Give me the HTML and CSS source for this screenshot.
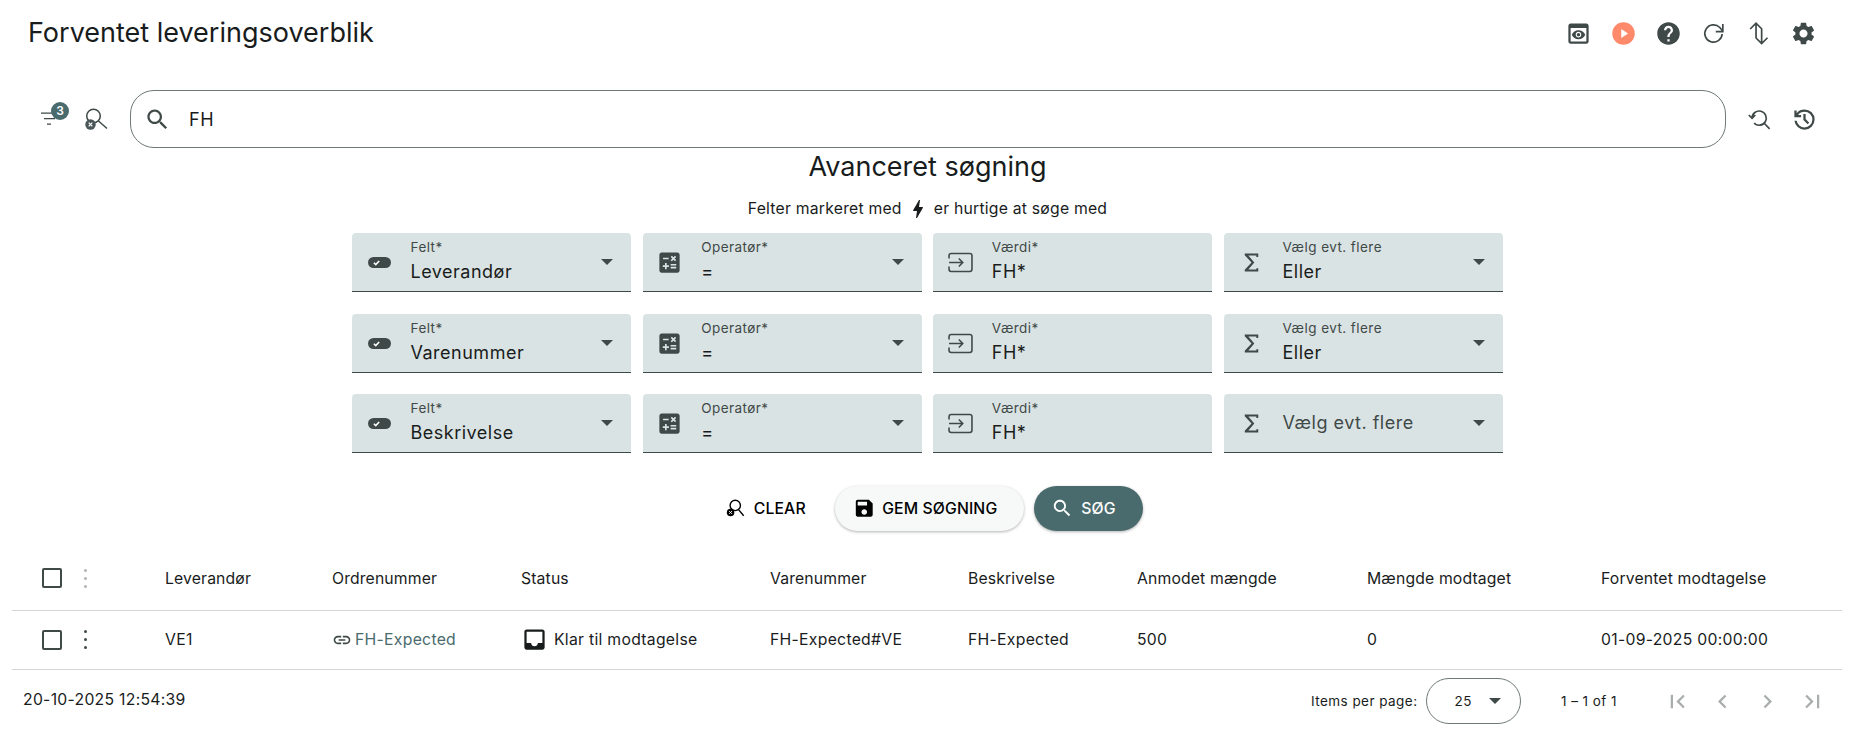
FILE: index.html
```html
<!DOCTYPE html>
<html lang="da">
<head>
<meta charset="utf-8">
<title>Forventet leveringsoverblik</title>
<link rel="stylesheet" href="styles.css">
</head>
<body>
<svg class="sprite" width="0" height="0">
  <defs>
    <symbol id="i-search" viewBox="0 0 24 24"><path d="M15.5 14h-.79l-.28-.27C15.41 12.59 16 11.11 16 9.5 16 5.91 13.09 3 9.5 3S3 5.91 3 9.5 5.91 16 9.5 16c1.61 0 3.09-.59 4.23-1.57l.27.28v.79l5 4.99L20.49 19l-4.99-5zm-6 0C7.01 14 5 11.99 5 9.5S7.01 5 9.5 5 14 7.01 14 9.5 11.99 14 9.5 14z"/></symbol>
    <symbol id="i-toggle" viewBox="0 0 24 24"><rect x="1.800" y="7.100" width="20.400" height="9.800" rx="4.900"/><path d="M7 12.200l1.700 1.700 3-3.200" fill="none" stroke="#fff" stroke-width="1.400"/></symbol>
    <symbol id="i-calc" viewBox="0 0 24 24"><path d="M19 3H5c-1.100 0-2 .9-2 2v14c0 1.100.9 2 2 2h14c1.100 0 2-.9 2-2V5c0-1.100-.9-2-2-2zm-5.970 4.060L14.090 6l1.410 1.410L16.910 6l1.060 1.060-1.410 1.410 1.410 1.410-1.060 1.060-1.410-1.400-1.410 1.410-1.060-1.060 1.410-1.410-1.410-1.420zm-6.780.66h5v1.500h-5v-1.500zM11.500 16h-2v2H8v-2H6v-1.500h2v-2h1.500v2h2V16zm6.500 1.250h-5v-1.500h5v1.500zm0-2.500h-5v-1.500h5v1.500z"/></symbol>
    <symbol id="i-input" viewBox="0 0 24 24"><path d="M1.800 8.500V6c0-1.100.9-2 2-2h16.400c1.100 0 2 .9 2 2v12c0 1.100-.9 2-2 2H3.800c-1.100 0-2-.9-2-2v-2.500M1.800 12H14M10.500 8.500l3.500 3.500-3.500 3.500" fill="none" stroke="#3f4948" stroke-width="1.400"/></symbol>
    <symbol id="i-sigma" viewBox="0 0 24 24"><path d="M6 4h12v3h-1.700V5.800H9.200l5.300 6.200-5.300 6.200h7.100V17H18v3H6v-1.600L12 12 6 5.600z"/></symbol>
  </defs>
</svg>

<header class="topbar">
  <h1 class="title">Forventet leveringsoverblik</h1>
  <div class="top-icons">
    <svg class="ico" viewBox="0 0 24 24"><path d="M19 3H5c-1.110 0-2 .9-2 2v14c0 1.100.89 2 2 2h14c1.100 0 2-.9 2-2V5c0-1.100-.89-2-2-2zm0 16H5V7h14v12zm-5.500-6c0 .83-.67 1.500-1.500 1.500s-1.500-.67-1.500-1.500.67-1.500 1.500-1.500 1.500.67 1.500 1.500zM12 9c-2.730 0-5.060 1.660-6 4 .94 2.340 3.270 4 6 4s5.060-1.660 6-4c-.94-2.340-3.270-4-6-4zm0 6.500c-1.380 0-2.500-1.120-2.500-2.500s1.120-2.500 2.500-2.500 2.500 1.120 2.500 2.500-1.120 2.500-2.500 2.500z"/></svg>
    <svg class="ico" viewBox="0 0 24 24"><circle cx="12" cy="12" r="10" fill="#ff8a6b"/><path d="M10 8v8l6-4z" fill="#fff"/></svg>
    <svg class="ico" viewBox="0 0 24 24"><path d="M12 2C6.480 2 2 6.480 2 12s4.480 10 10 10 10-4.480 10-10S17.520 2 12 2zm1 17h-2v-2h2v2zm2.070-7.750l-.9.92C13.450 12.900 13 13.500 13 15h-2v-.5c0-1.100.45-2.100 1.170-2.830l1.240-1.260c.37-.36.59-.86.59-1.410 0-1.100-.9-2-2-2s-2 .9-2 2H8c0-2.210 1.790-4 4-4s4 1.790 4 4c0 .88-.36 1.680-.93 2.250z"/></svg>
    <svg class="ico" viewBox="0 0 24 24"><path class="line" d="M19.700 12.500A7.700 7.700 0 1 1 17.600 6.700L20 9.500M20.300 3.600v6.800H14"/></svg>
    <svg class="ico" viewBox="0 0 24 24"><path class="line" d="M9.800 16V2.800M4.600 8l5.200-5.200L15 8M14.800 7.500V21M9.600 15.800l5.200 5.200 5.200-5.200"/></svg>
    <svg class="ico" viewBox="0 0 24 24"><path d="M19.140 12.940c.04-.3.06-.61.06-.94 0-.32-.02-.64-.07-.94l2.030-1.580c.18-.14.23-.41.12-.61l-1.920-3.320c-.12-.22-.37-.29-.59-.22l-2.390.96c-.5-.38-1.030-.7-1.620-.94l-.36-2.540c-.04-.24-.24-.41-.48-.41h-3.840c-.24 0-.43.17-.47.41l-.36 2.540c-.59.24-1.130.57-1.620.94l-2.390-.96c-.22-.08-.47 0-.59.22L2.740 8.870c-.12.21-.08.47.12.61l2.030 1.580c-.05.3-.09.63-.09.94s.02.64.07.94l-2.030 1.580c-.18.14-.23.41-.12.61l1.920 3.320c.12.22.37.29.59.22l2.390-.96c.5.38 1.030.7 1.620.94l.36 2.540c.05.24.24.41.48.41h3.840c.24 0 .44-.17.47-.41l.36-2.540c.59-.24 1.130-.56 1.620-.94l2.390.96c.22.08.47 0 .59-.22l1.920-3.320c.12-.22.07-.47-.12-.61l-2.010-1.580zM12 15.600c-1.980 0-3.600-1.620-3.600-3.600s1.620-3.600 3.600-3.600 3.600 1.620 3.600 3.600-1.620 3.600-3.600 3.600z"/></svg>
  </div>
</header>

<section class="searchbar">
  <div class="filter-btn">
    <svg class="ico-filter" viewBox="0 0 16 16"><path d="M0 .6h15v1.200H0zM3 6h11v1.200H3zM6 11.500h4v1.200H6z"/></svg>
    <span class="badge">3</span>
  </div>
  <svg class="ico-clear" viewBox="0 0 24 24">
    <circle cx="9.500" cy="9" r="6.800" class="line"/><path d="M14.500 14l8.500 7.500" class="line"/>
    <circle cx="6.500" cy="17.500" r="5.200" fill="#4a5658"/><path d="M4.700 15.700l3.600 3.600M8.300 15.700l-3.600 3.600" stroke="#fff" stroke-width="1.200"/>
  </svg>
  <div class="searchbox">
    <svg class="ico-search" viewBox="0 0 24 24"><use href="#i-search"/></svg>
    <span class="query">FH</span>
  </div>
  <div class="search-actions">
    <svg class="ico" viewBox="0 0 24 24"><path class="line" d="M5.400 10.800A6.300 6.300 0 1 1 7.200 15.200M16.200 15.300L21 20.300M2.500 8l2.900 3 2.900-3"/></svg>
    <svg class="ico" viewBox="0 0 24 24"><path d="M12 21q-3.450 0-6.012-2.288T3.050 13H5.100q.35 2.600 2.313 4.300T12 19q2.925 0 4.963-2.037T19 12q0-2.925-2.037-4.963T12 5q-1.725 0-3.225.8T6.250 8H9v2H3V4h2v2.350q1.275-1.600 3.113-2.475T12 3q3.750 0 6.375 2.625T21 12q0 3.750-2.625 6.375T12 21Zm2.800-4.800L11 12.400V7h2v4.600l3.200 3.200-1.400 1.400Z"/></svg>
  </div>
</section>

<section class="advanced">
  <h2 class="adv-title">Avanceret søgning</h2>
  <p class="adv-hint">Felter markeret med
    <svg class="ico-bolt" viewBox="0 0 24 24"><path d="M11 21h-1l1-7H7.500c-.58 0-.57-.32-.38-.66.19-.34.05-.08.07-.12C8.480 10.940 10.420 7.540 13 3h1l-1 7h3.500c.49 0 .56.33.47.51l-.07.15C12.960 17.550 11 21 11 21z"/></svg>
    er hurtige at søge med</p>

  <div class="rows">
    <div class="row-fields">
      <div class="field"><svg class="f-ico" viewBox="0 0 24 24"><use href="#i-toggle"/></svg><div class="f-text"><span class="f-label">Felt*</span><span class="f-value">Leverandør</span></div><span class="caret"></span></div>
      <div class="field"><svg class="f-ico" viewBox="0 0 24 24"><use href="#i-calc"/></svg><div class="f-text"><span class="f-label">Operatør*</span><span class="f-value">=</span></div><span class="caret"></span></div>
      <div class="field"><svg class="f-ico" viewBox="0 0 24 24"><use href="#i-input"/></svg><div class="f-text"><span class="f-label">Værdi*</span><span class="f-value">FH*</span></div></div>
      <div class="field"><svg class="f-ico" viewBox="0 0 24 24"><use href="#i-sigma"/></svg><div class="f-text"><span class="f-label">Vælg evt. flere</span><span class="f-value">Eller</span></div><span class="caret"></span></div>
    </div>
    <div class="row-fields">
      <div class="field"><svg class="f-ico" viewBox="0 0 24 24"><use href="#i-toggle"/></svg><div class="f-text"><span class="f-label">Felt*</span><span class="f-value">Varenummer</span></div><span class="caret"></span></div>
      <div class="field"><svg class="f-ico" viewBox="0 0 24 24"><use href="#i-calc"/></svg><div class="f-text"><span class="f-label">Operatør*</span><span class="f-value">=</span></div><span class="caret"></span></div>
      <div class="field"><svg class="f-ico" viewBox="0 0 24 24"><use href="#i-input"/></svg><div class="f-text"><span class="f-label">Værdi*</span><span class="f-value">FH*</span></div></div>
      <div class="field"><svg class="f-ico" viewBox="0 0 24 24"><use href="#i-sigma"/></svg><div class="f-text"><span class="f-label">Vælg evt. flere</span><span class="f-value">Eller</span></div><span class="caret"></span></div>
    </div>
    <div class="row-fields">
      <div class="field"><svg class="f-ico" viewBox="0 0 24 24"><use href="#i-toggle"/></svg><div class="f-text"><span class="f-label">Felt*</span><span class="f-value">Beskrivelse</span></div><span class="caret"></span></div>
      <div class="field"><svg class="f-ico" viewBox="0 0 24 24"><use href="#i-calc"/></svg><div class="f-text"><span class="f-label">Operatør*</span><span class="f-value">=</span></div><span class="caret"></span></div>
      <div class="field"><svg class="f-ico" viewBox="0 0 24 24"><use href="#i-input"/></svg><div class="f-text"><span class="f-label">Værdi*</span><span class="f-value">FH*</span></div></div>
      <div class="field"><svg class="f-ico" viewBox="0 0 24 24"><use href="#i-sigma"/></svg><div class="f-text f-empty"><span class="f-placeholder">Vælg evt. flere</span></div><span class="caret"></span></div>
    </div>
  </div>

  <div class="buttons">
    <button class="btn btn-text">
      <svg class="b-ico" viewBox="0 0 24 24"><circle cx="12" cy="9" r="5.500" fill="none" stroke="#000" stroke-width="1.500"/><path d="M15.500 13.500l5.500 6.500" stroke="#000" stroke-width="1.500"/><circle cx="7" cy="16.500" r="4" fill="#000"/><path d="M5.500 15l3 3M8.500 15l-3 3" stroke="#fff" stroke-width="1"/></svg>
      CLEAR</button>
    <button class="btn btn-light">
      <svg class="b-ico" viewBox="0 0 24 24"><path d="M17 3H5c-1.110 0-2 .9-2 2v14c0 1.100.89 2 2 2h14c1.100 0 2-.9 2-2V7l-4-4zm-5 16c-1.660 0-3-1.340-3-3s1.340-3 3-3 3 1.340 3 3-1.340 3-3 3zm3-10H5V5h10v4z"/></svg>
      GEM SØGNING</button>
    <button class="btn btn-primary">
      <svg class="b-ico b-ico-white" viewBox="0 0 24 24"><use href="#i-search"/></svg>
      SØG</button>
  </div>
</section>

<section class="table">
  <div class="t-row t-head">
    <span class="check"></span>
    <span class="dots dots-muted"><i></i><i></i><i></i></span>
    <span>Leverandør</span><span>Ordrenummer</span><span>Status</span><span>Varenummer</span><span>Beskrivelse</span><span>Anmodet mængde</span><span>Mængde modtaget</span><span>Forventet modtagelse</span>
  </div>
  <div class="t-row t-body">
    <span class="check"></span>
    <span class="dots"><i></i><i></i><i></i></span>
    <span>VE1</span>
    <span class="link"><svg class="link-ico" viewBox="0 0 24 24"><path d="M3.900 12c0-1.710 1.390-3.100 3.100-3.100h4V7H7c-2.760 0-5 2.240-5 5s2.240 5 5 5h4v-1.900H7c-1.710 0-3.100-1.390-3.100-3.100zM8 13h8v-2H8v2zm9-6h-4v1.900h4c1.710 0 3.100 1.390 3.100 3.100s-1.390 3.100-3.100 3.100h-4V17h4c2.760 0 5-2.240 5-5s-2.240-5-5-5z"/></svg>FH-Expected</span>
    <span class="status"><svg class="status-ico" viewBox="0 0 24 24"><path d="M19 3H4.990c-1.110 0-1.980.89-1.980 2L3 19c0 1.100.88 2 1.990 2H19c1.100 0 2-.9 2-2V5c0-1.110-.9-2-2-2zm0 12h-4c0 1.660-1.350 3-3 3s-3-1.340-3-3H4.990V5H19v10z"/></svg>Klar til modtagelse</span>
    <span>FH-Expected#VE</span><span>FH-Expected</span><span>500</span><span>0</span><span>01-09-2025 00:00:00</span>
  </div>
</section>

<footer class="footer">
  <span class="stamp">20-10-2025 12:54:39</span>
  <div class="pager">
    <span class="pg-label">Items per page:</span>
    <div class="pg-select"><span>25</span><span class="caret caret-pg"></span></div>
    <span class="pg-range">1 – 1 of 1</span>
    <div class="pg-nav">
      <svg viewBox="0 0 24 24"><path d="M18.410 16.590L13.820 12l4.590-4.590L17 6l-6 6 6 6zM6 6h2v12H6z"/></svg>
      <svg viewBox="0 0 24 24"><path d="M15.410 7.410L14 6l-6 6 6 6 1.410-1.410L10.830 12z"/></svg>
      <svg viewBox="0 0 24 24"><path d="M10 6L8.590 7.410 13.170 12l-4.580 4.590L10 18l6-6z"/></svg>
      <svg viewBox="0 0 24 24"><path d="M5.590 7.410L10.180 12l-4.590 4.590L7 18l6-6-6-6zM16 6h2v12h-2z"/></svg>
    </div>
  </div>
</footer>
</body>
</html>
```
FILE: styles.css
```css
* { box-sizing: border-box; }
html, body { margin: 0; height: 732px; overflow: hidden; background: #fff; }
body { font-family: Inter, "Noto Sans", sans-serif; color: #191c1c; }
.sprite { display: block; height: 0; }
svg { fill: #3f4948; flex: none; display: block; }
.line { fill: none; stroke: #3f4948; stroke-width: 1.5; }

.topbar { height: 66px; display: flex; align-items: center; justify-content: space-between; padding: 0 35px 0 28px; }
.title { margin: 0; font-size: 27px; line-height: 66px; font-weight: 400; }
.top-icons { display: flex; gap: 18px; }
.ico { width: 27px; height: 27px; }

.searchbar { display: flex; align-items: center; height: 58px; margin-top: 24px; padding-left: 41px; }
.filter-btn { position: relative; width: 16px; height: 16px; margin-top: 2px; }
.ico-filter { width: 16px; height: 16px; }
.badge { position: absolute; left: 10px; top: -10px; width: 18px; height: 18px; border-radius: 50%; background: #4a6b6d; color: #fff; font-size: 12px; font-weight: 600; line-height: 18px; text-align: center; }
.ico-clear { width: 24px; height: 24px; margin-left: 27px; }
.searchbox { flex: none; width: 1596px; height: 58px; margin-left: 22px; border: 1px solid #6f7979; border-radius: 24px; display: flex; align-items: center; padding-left: 13px; }
.ico-search { width: 27px; height: 27px; }
.query { margin-left: 18px; font-size: 18px; letter-spacing: .5px; }
.search-actions { display: flex; gap: 18px; margin-left: 20px; }

.advanced { display: flex; flex-direction: column; align-items: center; }
.adv-title { margin: 0 0 0 3px; font-size: 27px; line-height: 38px; font-weight: 400; height: 38px; }
.adv-hint { margin: 13px 0 0 3px; height: 20px; font-size: 15.75px; line-height: 20px; letter-spacing: .22px; display: flex; align-items: center; gap: 4px; }
.ico-bolt { width: 24px; height: 24px; fill: #191c1c; }

.rows { margin: 14px 0 0 3px; display: flex; flex-direction: column; gap: 21.5px; width: 1151px; }
.row-fields { display: flex; gap: 11.7px; }
.field { flex: 1 1 0; height: 59px; background: #dae3e3; border-bottom: 1.5px solid #3f4948; border-radius: 4px 4px 0 0; display: flex; }
.f-ico { width: 27px; height: 27px; margin: 16px 18px 0 13.5px; }
.f-text { flex: 1; display: flex; flex-direction: column; padding-top: 6px; }
.f-label { font-size: 13.5px; line-height: 16px; letter-spacing: .45px; color: #3f4948; }
.f-value { font-size: 18px; line-height: 24px; letter-spacing: .5px; margin-top: 5px; color: #191c1c; }
.f-empty { justify-content: center; padding-top: 0; }
.f-placeholder { font-size: 18px; line-height: 24px; letter-spacing: .5px; color: #3f4948; }
.caret { width: 0; height: 0; border-left: 6px solid transparent; border-right: 6px solid transparent; border-top: 6px solid #3f4948; margin: 26px 18px 0 0; flex: none; }

.buttons { display: flex; align-items: center; margin: 33px 0 0 15px; height: 45px; }
.btn { height: 45px; border: 0; border-radius: 23px; font-family: inherit; font-size: 15.75px; font-weight: 500; letter-spacing: .12px; display: flex; align-items: center; padding: 0; }
.b-ico { width: 22.5px; height: 22.5px; fill: #000; }
.b-ico-white { fill: #fff; }
.btn-text { background: none; color: #000; gap: 7px; margin-right: 29px; }
.btn-light { background: #f7f9f8; color: #000; width: 189px; padding-left: 18px; gap: 7px; box-shadow: 0 1px 3px rgba(0,0,0,.3); margin-right: 10px; }
.btn-primary { background: #4a6b6d; color: #fff; width: 109px; padding-left: 17px; gap: 8px; box-shadow: 0 1px 3px rgba(0,0,0,.3); }

.table { margin: 16px 10px 0 12px; }
.t-row { display: grid; grid-template-columns: 32px 91px 167px 189px 249px 198px 169px 230px 234px 1fr; align-items: center; padding: 0 0 1px 30px; font-size: 15.75px; letter-spacing: .28px; border-bottom: 1.5px solid #d4d6d6; }
.t-head { height: 64px; letter-spacing: .14px; }
.t-body { height: 59px; }
.check { width: 20px; height: 20px; border: 2px solid #3f4948; border-radius: 2px; }
.dots { display: flex; flex-direction: column; align-items: flex-start; gap: 5px; padding-left: 10px; }
.dots i { width: 3px; height: 3px; border-radius: 50%; background: #3f4948; }
.dots-muted i { background: #b0b4b4; }
.link { display: flex; align-items: center; gap: 3px; color: #4a6b6d; }
.link-ico { width: 20px; height: 20px; }
.status { display: flex; align-items: center; gap: 6px; }
.status-ico { width: 27px; height: 27px; fill: #191c1c; }

.footer { height: 62px; display: flex; align-items: center; justify-content: space-between; padding: 0 26px 0 23px; }
.stamp { font-size: 15.75px; letter-spacing: .28px; margin-top: -3px; }
.pager { display: flex; align-items: center; font-size: 13.5px; letter-spacing: .45px; }
.pg-select { width: 95px; height: 46px; margin-left: 9px; border: 1px solid #6f7979; border-radius: 23px; display: flex; align-items: center; padding-left: 27px; }
.caret-pg { margin: 0 0 0 17px; }
.pg-range { margin-left: 39.5px; }
.pg-nav { display: flex; gap: 18px; margin-left: 47px; }
.pg-nav svg { width: 27px; height: 27px; fill: #a9adad; }
```
